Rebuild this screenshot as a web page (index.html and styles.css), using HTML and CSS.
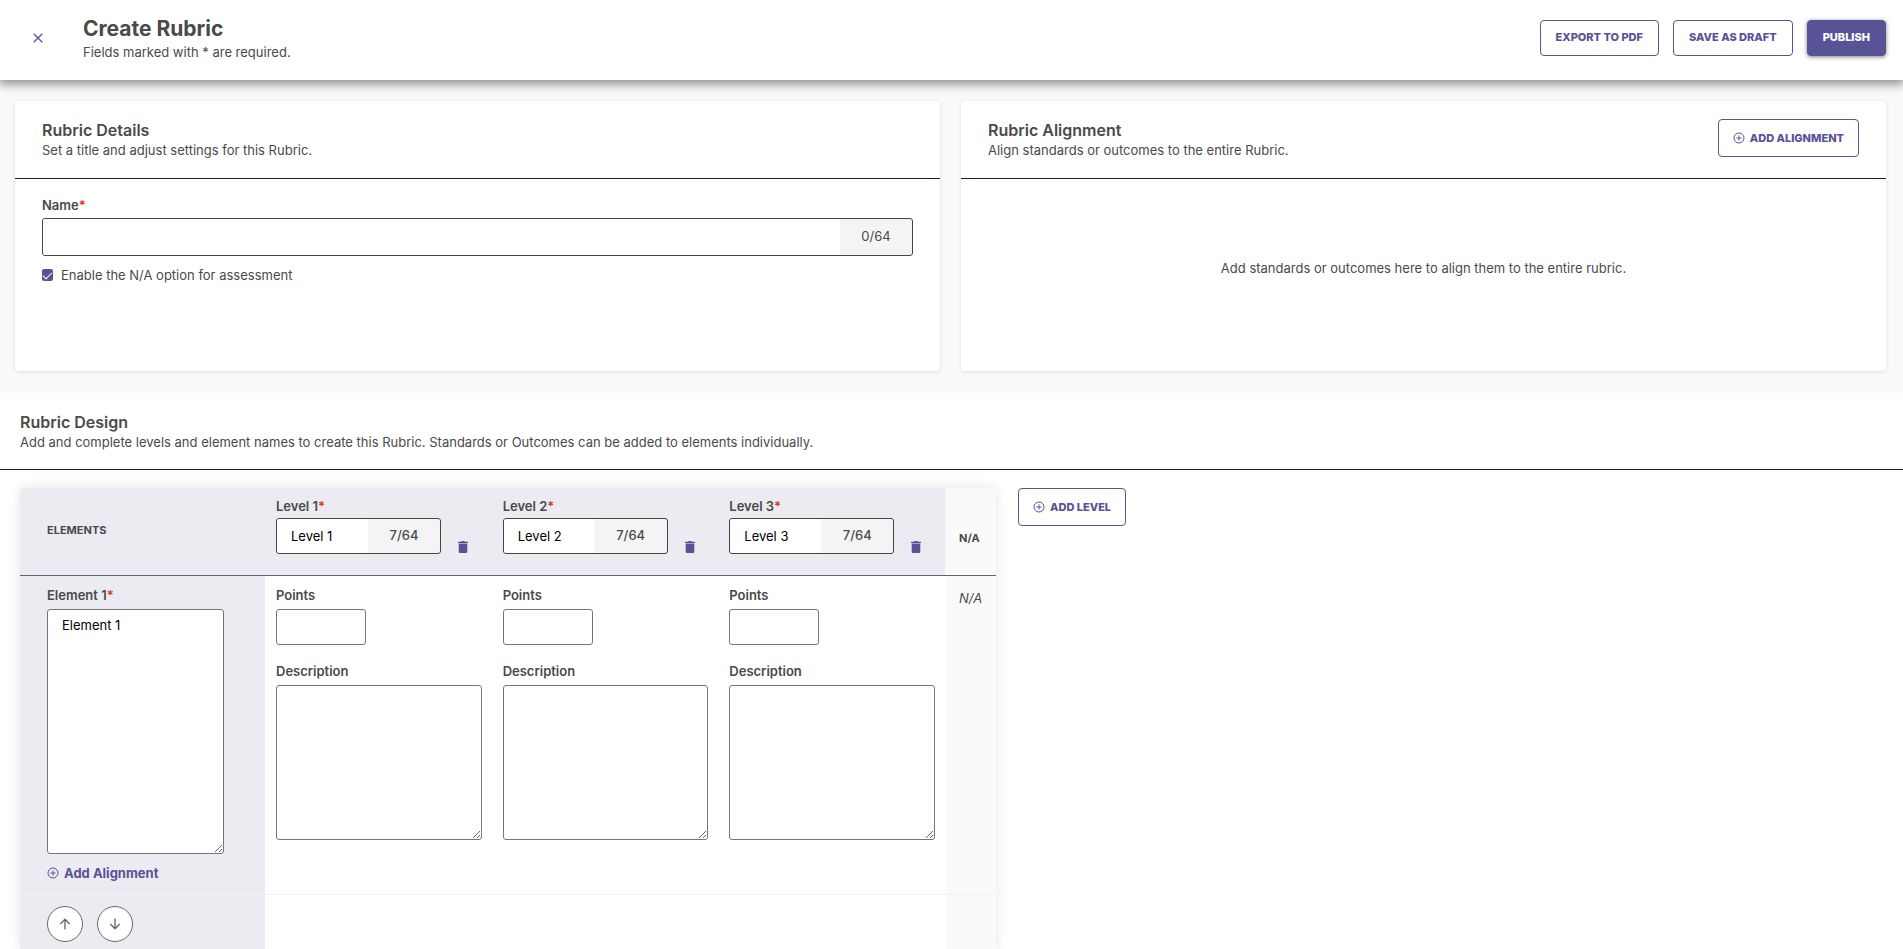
FILE: index.html
```html
<!DOCTYPE html>
<html lang="en">
<head>
<meta charset="utf-8">
<title>Create Rubric</title>
<link rel="stylesheet" href="styles.css">
</head>
<body>
<svg class="sprite" aria-hidden="true">
  <symbol id="plus" viewBox="0 0 12 12"><circle cx="6" cy="6" r="5" fill="none" stroke="currentColor"/><path d="M6 3.4v5.2M3.4 6h5.2" stroke="currentColor"/></symbol>
  <symbol id="trash" viewBox="0 0 10 12"><path d="M0 .7h3L3.600 0h2.800L7 .7h3v1.200H0zM.7 2.600h8.600v8.200q0 1.200-1.200 1.200H1.900Q.7 12 .7 10.800z" fill="currentColor"/></symbol>
  <symbol id="up" viewBox="0 0 12 12"><path d="M6 11.500V1.200M1.300 6 6 1.200 10.700 6" fill="none" stroke="currentColor" stroke-width="1.300"/></symbol>
  <symbol id="down" viewBox="0 0 12 12"><path d="M6 .5v10.300M1.300 6 6 10.800 10.700 6" fill="none" stroke="currentColor" stroke-width="1.300"/></symbol>
</svg>
<div class="app">
  <header class="topbar">
    <button class="close" type="button" aria-label="Close"><svg viewBox="0 0 10 10" width="10" height="10"><path d="M.7.7l8.600 8.600M9.300.7.7 9.300" stroke="currentColor" stroke-width="1.300"/></svg></button>
    <div class="heading">
      <h1>Create Rubric</h1>
      <p>Fields marked with * are required.</p>
    </div>
    <div class="actions">
      <button class="btn" type="button">EXPORT TO PDF</button>
      <button class="btn" type="button">SAVE AS DRAFT</button>
      <button class="btn primary" type="button">PUBLISH</button>
    </div>
  </header>
  <main class="content">
    <div class="cards">
      <section class="card">
        <div class="card-head">
          <div><h2>Rubric Details</h2><p>Set a title and adjust settings for this Rubric.</p></div>
        </div>
        <div class="card-body">
          <label class="label" for="name">Name<span class="req">*</span></label>
          <div class="counted tall"><input id="name" type="text"><span class="count">0/64</span></div>
          <div class="check"><input id="na" type="checkbox" checked><label for="na">Enable the N/A option for assessment</label></div>
        </div>
      </section>
      <section class="card">
        <div class="card-head">
          <div><h2>Rubric Alignment</h2><p>Align standards or outcomes to the entire Rubric.</p></div>
          <button class="btn add" type="button"><svg class="plus"><use href="#plus"/></svg>ADD ALIGNMENT</button>
        </div>
        <p class="empty">Add standards or outcomes here to align them to the entire rubric.</p>
      </section>
    </div>
    <section class="design">
      <div class="design-head">
        <h2>Rubric Design</h2>
        <p>Add and complete levels and element names to create this Rubric. Standards or Outcomes can be added to elements individually.</p>
      </div>
      <div class="design-body">
        <table class="rubric">
          <colgroup><col class="c-element"><col class="c-level"><col class="c-level"><col class="c-level"><col class="c-na"></colgroup>
          <thead>
            <tr>
              <th class="first" scope="col">ELEMENTS</th>
              <th class="level" scope="col">
                <label class="label" for="level1">Level 1<span class="req">*</span></label>
                <div class="level-row"><div class="counted"><input id="level1" type="text" value="Level 1"><span class="count">7/64</span></div><button class="trash" type="button" aria-label="Delete Level 1"><svg><use href="#trash"/></svg></button></div>
              </th>
              <th class="level" scope="col">
                <label class="label" for="level2">Level 2<span class="req">*</span></label>
                <div class="level-row"><div class="counted"><input id="level2" type="text" value="Level 2"><span class="count">7/64</span></div><button class="trash" type="button" aria-label="Delete Level 2"><svg><use href="#trash"/></svg></button></div>
              </th>
              <th class="level" scope="col">
                <label class="label" for="level3">Level 3<span class="req">*</span></label>
                <div class="level-row"><div class="counted"><input id="level3" type="text" value="Level 3"><span class="count">7/64</span></div><button class="trash" type="button" aria-label="Delete Level 3"><svg><use href="#trash"/></svg></button></div>
              </th>
              <th class="na" scope="col">N/A</th>
            </tr>
          </thead>
          <tbody>
            <tr class="element">
              <td class="first">
                <label class="label" for="element1">Element 1<span class="req">*</span></label>
                <textarea id="element1" class="element-name">Element 1</textarea>
                <button class="link" type="button"><svg class="plus"><use href="#plus"/></svg>Add Alignment</button>
              </td>
              <td class="level">
                <label class="label" for="points1">Points</label><input id="points1" class="points" type="text">
                <label class="label" for="desc1">Description</label><textarea id="desc1" class="desc"></textarea>
              </td>
              <td class="level">
                <label class="label" for="points2">Points</label><input id="points2" class="points" type="text">
                <label class="label" for="desc2">Description</label><textarea id="desc2" class="desc"></textarea>
              </td>
              <td class="level">
                <label class="label" for="points3">Points</label><input id="points3" class="points" type="text">
                <label class="label" for="desc3">Description</label><textarea id="desc3" class="desc"></textarea>
              </td>
              <td class="na">N/A</td>
            </tr>
            <tr class="controls">
              <td class="first"><div class="moves">
                <button class="move" type="button" aria-label="Move up"><svg><use href="#up"/></svg></button>
                <button class="move" type="button" aria-label="Move down"><svg><use href="#down"/></svg></button>
              </div></td>
              <td colspan="3"></td>
              <td class="na"></td>
            </tr>
          </tbody>
        </table>
        <button class="btn add" type="button"><svg class="plus"><use href="#plus"/></svg>ADD LEVEL</button>
      </div>
    </section>
  </main>
</div>
</body>
</html>
```
FILE: styles.css
```css
* { box-sizing: border-box; }
body { margin: 0; font: 13px/20px Inter, "Liberation Sans", sans-serif; color: #4a4a4a; background: #fafafa; }
h1, h2, p { margin: 0; }
h1 { font-size: 21px; line-height: 27px; font-weight: 700; }
h2 { font-size: 16px; line-height: 20px; font-weight: 600; }
button, input, textarea { font: inherit; margin: 0; }
button { cursor: pointer; }
.sprite { display: none; }

.app { height: 100vh; display: flex; flex-direction: column; }
.topbar { display: flex; align-items: flex-start; height: 80px; flex: none; padding: 15px 17px 0 20px; background: #fff; box-shadow: 0 2px 10px 2px rgba(0, 0, 0, .45); z-index: 1; }
.close { display: flex; align-items: center; justify-content: center; width: 36px; height: 46px; padding: 0; border: 0; background: none; color: #585296; }
.heading { flex: 1; padding-left: 27px; }
.actions { display: flex; gap: 14px; padding-top: 5px; }
.btn { display: inline-flex; align-items: center; justify-content: center; height: 36px; padding: 0 15px 2px; border: 1px solid #585296; border-radius: 4px; background: #fff; color: #585296; font-size: 11px; font-weight: 800; white-space: nowrap; }
.btn.primary { background: #585296; color: #fff; box-shadow: 0 1px 4px rgba(0, 0, 0, .5); }
.btn.add { height: 38px; padding: 0 14px; gap: 5px; }
.plus { width: 12px; height: 12px; flex: none; }

.content { flex: 1; min-height: 0; overflow-y: auto; scrollbar-width: none; }
.cards { display: grid; grid-template-columns: 1fr 1fr; gap: 21px; padding: 21px 17px 22px 15px; }
.card { display: flex; flex-direction: column; min-height: 270px; background: #fff; border-radius: 4px; box-shadow: 0 1px 4px rgba(0, 0, 0, .12); }
.card-head { display: flex; justify-content: space-between; align-items: center; height: 78px; padding: 0 27px; border-bottom: 1px solid #2a1548; }
.card-head .btn { margin-bottom: 4px; }
.card-body { padding: 16px 27px; }
.label { display: block; font-weight: 600; line-height: 20px; color: #4a4a4a; }
.req { color: #cf3a1b; }
.counted { display: flex; height: 36px; border: 1px solid #444; border-radius: 3px; background: #f4f4f4; overflow: hidden; }
.counted input { flex: 1; min-width: 0; border: 0; padding: 0 14px; background: #fff; color: #000; border-radius: 2px; outline: none; }
.counted.tall { height: 38px; margin-top: 3px; }
.count { width: 72px; text-align: center; line-height: 32px; font-weight: 500; }
.tall .count { font-weight: 400; line-height: 34px; }
.check { display: flex; align-items: center; gap: 8px; margin-top: 9px; }
.check input { width: 11px; height: 12px; appearance: none; border-radius: 2px; background: #585296; display: grid; place-items: center; }
.check input::after { content: ""; width: 8px; height: 4px; border: solid #fff; border-width: 0 0 1px 1px; rotate: -45deg; margin-bottom: 2px; }
.empty { flex: 1; display: flex; align-items: center; justify-content: center; padding-bottom: 14px; }

.design { background: #fff; }
.design-head { height: 77px; padding: 19px 20px 0; border-bottom: 1px solid #26193f; }
.design-body { display: flex; align-items: flex-start; gap: 22px; padding: 18px 20px 40px; }
.rubric { width: 976px; table-layout: fixed; border-collapse: separate; border-spacing: 0; border-radius: 4px; box-shadow: 0 0 14px rgba(0, 0, 0, .1); }
.c-element { width: 245px; }
.c-na { width: 51px; }
th, td { padding: 0; text-align: left; vertical-align: top; }
thead th { height: 88px; background: #edebf2; border-bottom: 1px solid #66636d; font-weight: 400; }
thead th.first, thead th.na { vertical-align: middle; font-size: 11px; font-weight: 700; }
thead th.first { border-top-left-radius: 4px; padding-bottom: 4px; }
thead th.na { padding-top: 12px; }
th.level, td.level { padding: 8px 10px 0 11px; }
td.level { padding-top: 9px; }
.first { padding: 0 27px; background: #edebf2; }
th.na, td.na { background: #fafafa; padding-left: 14px; }
.level-row { display: flex; align-items: flex-end; gap: 17px; margin-top: 2px; }
.level-row .counted { width: 165px; }
.trash { width: 10px; height: 15px; padding: 0; border: 0; background: none; color: #585296; line-height: 0; }
.trash svg { width: 10px; height: 12px; }
.element td { height: 319px; border-bottom: 1px solid #f0f0f2; }
.element td.first { padding-top: 9px; }
.element td.na { padding-top: 12px; font-style: italic; }
textarea, .points { display: block; border: 1px solid #767676; border-radius: 3px; background: #fff; color: #000; padding: 5px 14px; }
.element-name { width: 177px; height: 245px; margin-top: 4px; }
.points { width: 90px; height: 36px; margin: 4px 0 16px; }
.desc { width: 100%; height: 155px; margin-top: 4px; }
.link { display: flex; align-items: center; gap: 5px; margin-top: 9px; padding: 0; border: 0; background: none; color: #585296; font-weight: 700; }
.controls .first { padding: 11px 27px; }
.moves { display: flex; gap: 14px; }
.move { display: grid; place-items: center; width: 36px; height: 36px; padding: 0; border: 1px solid #666; border-radius: 50%; background: #fff; color: #666; }
.move svg { width: 12px; height: 12px; }
```
